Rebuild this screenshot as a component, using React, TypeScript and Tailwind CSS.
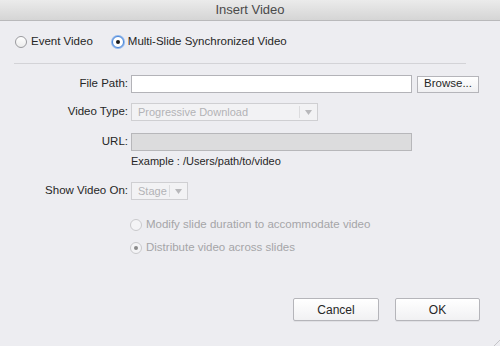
import React from 'react';

const FONT = { fontFamily: '"Liberation Sans", Arial, sans-serif' };

function Radio({ checked, disabled, focus }: { checked?: boolean; disabled?: boolean; focus?: boolean }) {
  return (
    <span
      className={`flex items-center justify-center w-[12px] h-[12px] rounded-full border shrink-0 ${
        focus
          ? 'border-[#4a86d8] shadow-[0_0_0_1px_#8fb6ec] bg-white'
          : disabled
          ? 'border-[#c9c9cc] bg-[#f4f4f6]'
          : 'border-[#9a9a9e] bg-gradient-to-b from-white to-[#ececec]'
      }`}
    >
      {checked && (
        <span className={`w-[4px] h-[4px] rounded-full ${disabled ? 'bg-[#8a8a8a]' : 'bg-[#1a1a1a]'}`} />
      )}
    </span>
  );
}

function Label({ children }: { children: React.ReactNode }) {
  return <div className="w-[131px] pr-[3px] text-right text-[11.5px] text-[#262626]">{children}</div>;
}

function Select({ value, width, divider }: { value: string; width: string; divider: string }) {
  return (
    <div className={`relative h-[18px] ${width} border border-[#cfcfd2] bg-[#f2f2f4] flex items-center`}>
      <span className="pl-[6px] text-[11px] text-[#b3b3b6]">{value}</span>
      <span className={`absolute top-[2px] bottom-[2px] w-px bg-[#dcdcde] ${divider}`} />
      <svg className="absolute right-[5px] top-[6px]" width="7" height="5" viewBox="0 0 7 5">
        <path d="M0 0 L7 0 L3.5 5 Z" fill="#b8b8bb" />
      </svg>
    </div>
  );
}

function Button({ children, width }: { children: React.ReactNode; width: string }) {
  return (
    <div
      className={`h-[23px] ${width} flex items-center justify-center border border-[#b5b5ba] rounded-[2px] bg-gradient-to-b from-white to-[#f1f1f3] text-[12px] text-[#262626] shadow-[0_1px_0_rgba(0,0,0,0.05)]`}
    >
      {children}
    </div>
  );
}

export default function App() {
  return (
    <div style={FONT} className="relative w-[500px] h-[346px] overflow-hidden bg-[#ededf1] text-[#262626]">
      {/* Title bar */}
      <div className="h-[21px] border-b border-[#b9b9bb] bg-gradient-to-b from-[#ebebeb] to-[#d5d5d5] flex items-center justify-center">
        <span className="text-[13px] text-[#4a4a4a]">Insert Video</span>
      </div>

      {/* Mode radios */}
      <div className="mt-[14px] h-[14px] pl-[15px] flex items-center text-[11.5px]">
        <Radio />
        <span className="ml-[4px]">Event Video</span>
        <span className="ml-[19px]" />
        <Radio checked focus />
        <span className="ml-[4px]">Multi-Slide Synchronized Video</span>
      </div>

      <div className="mt-[14px] mx-[14px] w-[452px] border-t border-[#d3d3d7]" />

      {/* File path */}
      <div className="mt-[11px] flex items-center h-[18px]">
        <Label>File Path:</Label>
        <div className="w-[281px] h-[18px] border border-[#b3b3b8] bg-white" />
        <div className="ml-[5px] w-[62px] h-[17px] border border-[#b5b5ba] bg-gradient-to-b from-white to-[#f0f0f2] flex items-center justify-center text-[11.5px]">
          Browse...
        </div>
      </div>

      {/* Video type */}
      <div className="mt-[10px] flex items-center h-[18px]">
        <Label>Video Type:</Label>
        <Select value="Progressive Download" width="w-[187px]" divider="right-[17px]" />
      </div>

      {/* URL */}
      <div className="mt-[12px] flex items-center h-[18px]">
        <Label>URL:</Label>
        <div className="w-[281px] h-[18px] border border-[#b7b7ba] bg-[#dcdcdd]" />
      </div>
      <div className="mt-[3px] pl-[131px] text-[11px] leading-[14px] text-[#262626]">Example : /Users/path/to/video</div>

      {/* Show video on */}
      <div className="mt-[14px] flex items-center h-[18px]">
        <Label>Show Video On:</Label>
        <Select value="Stage" width="w-[57px]" divider="right-[17px]" />
      </div>

      {/* Slide options (disabled) */}
      <div className="mt-[18px] pl-[130px] flex items-center h-[14px] text-[11.5px] text-[#a5a5a8]">
        <Radio disabled />
        <span className="ml-[4px]">Modify slide duration to accommodate video</span>
      </div>
      <div className="mt-[9px] pl-[130px] flex items-center h-[14px] text-[11.5px] text-[#a5a5a8]">
        <Radio checked disabled />
        <span className="ml-[4px]">Distribute video across slides</span>
      </div>

      {/* Buttons */}
      <div className="mt-[43px] pr-[20px] flex justify-end gap-[16px]">
        <Button width="w-[86px]">Cancel</Button>
        <Button width="w-[85px]">OK</Button>
      </div>

      {/* resize grip */}
      <svg className="absolute right-0 bottom-0" width="8" height="8" viewBox="0 0 8 8">
        <path d="M8 2 L2 8" stroke="#c4c4c8" strokeWidth="1" />
      </svg>
    </div>
  );
}
